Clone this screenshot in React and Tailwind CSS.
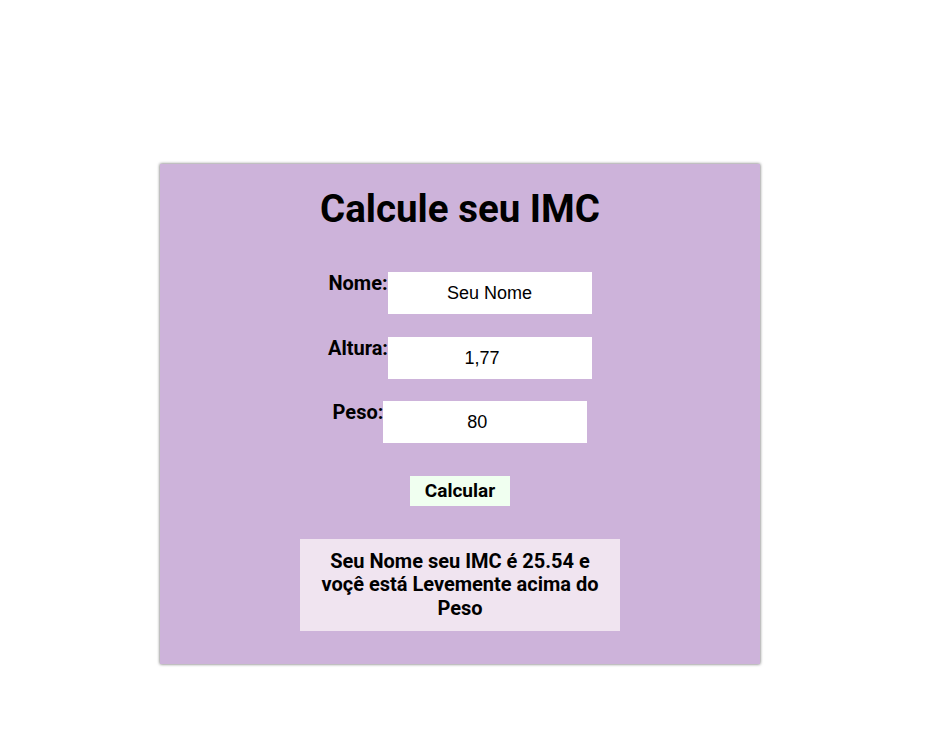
export default function App() {
  const rows = [
    { label: "Nome:", value: "Seu Nome", mt: "mt-[40px]", pad: "" },
    { label: "Altura:", value: "1,77", mt: "mt-[23px]", pad: "pr-[16px]" },
    { label: "Peso:", value: "80", mt: "mt-[22px]", pad: "pr-[16px]" },
  ];

  return (
    <div className="w-[930px] h-[743px] bg-white font-['Roboto',sans-serif] text-black">
      <div className="pt-[164px] pl-[160px] flex">
        <div className="w-[600px] h-[500px] bg-[#cdb3da] shadow-[0_0_3px_rgba(0,0,0,0.65)] flex flex-col items-center">
          <h1 className="mt-[22px] text-[38.5px] leading-[46px] font-bold">Calcule seu IMC</h1>

          {rows.map((r) => (
            <div key={r.label} className={`${r.mt} flex items-start`}>
              <label className="text-[20px] font-bold leading-[23px]">{r.label}</label>
              <input
                readOnly
                value={r.value}
                className={`w-[204px] h-[42px] bg-white text-center text-[18px] font-['Liberation_Sans',Arial,sans-serif] outline-none ${r.pad}`}
              />
            </div>
          ))}

          <button className="mt-[33px] w-[100px] h-[30px] bg-[#f0fff0] text-[19px] font-bold">
            Calcular
          </button>

          <div className="mt-[33px] w-[320px] h-[92px] bg-[#f0e4f0] flex items-center justify-center px-3">
            <p className="text-[20px] leading-[23.5px] font-bold text-center">
              Seu Nome seu IMC é 25.54 e voçê está Levemente acima do Peso
            </p>
          </div>
        </div>
      </div>
    </div>
  );
}
